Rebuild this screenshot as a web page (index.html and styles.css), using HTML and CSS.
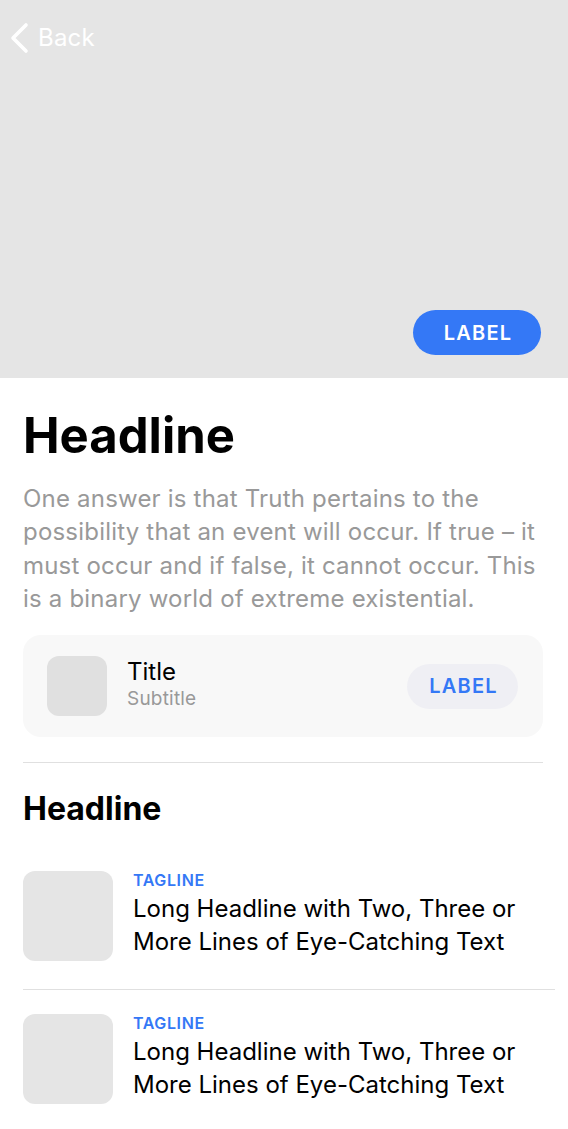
FILE: index.html
```html
<!DOCTYPE html>
<html>
<head>
<meta charset="utf-8">
<link rel="stylesheet" href="styles.css">
</head>
<body>
<div class="hero">
  <div class="nav">
    <svg class="chev" width="20" height="32" viewBox="0 0 20 32"><path d="M16 3 L3 16 L16 29" fill="none" stroke="#fff" stroke-width="3.6" stroke-linecap="round" stroke-linejoin="round"/></svg>
    <span class="back">Back</span>
  </div>
  <div class="hero-foot"><span class="btn-primary">LABEL</span></div>
</div>
<div class="content">
  <h1 class="title">Headline</h1>
  <p class="lead">One answer is that Truth pertains to the possibility that an event will occur. If true – it must occur and if false, it cannot occur. This is a binary world of extreme existential.</p>
  <div class="card">
    <div class="thumb-sm"></div>
    <div class="card-text">
      <div class="card-title">Title</div>
      <div class="card-sub">Subtitle</div>
    </div>
    <span class="btn-soft">LABEL</span>
  </div>
  <div class="rule"></div>
  <h2 class="section">Headline</h2>
  <div class="item">
    <div class="thumb"></div>
    <div class="item-text">
      <div class="tag">TAGLINE</div>
      <div class="item-title">Long Headline with Two, Three or More Lines of Eye-Catching Text</div>
    </div>
  </div>
  <div class="rule wide"></div>
  <div class="item">
    <div class="thumb"></div>
    <div class="item-text">
      <div class="tag">TAGLINE</div>
      <div class="item-title">Long Headline with Two, Three or More Lines of Eye-Catching Text</div>
    </div>
  </div>
</div>
</body>
</html>
```
FILE: styles.css
```css
* { box-sizing: border-box; }
body {
  margin: 0;
  width: 568px;
  background: #fff;
  font-family: Inter, "Noto Sans", sans-serif;
  color: #000;
}
.hero {
  height: 378px;
  background: #e5e5e5;
  display: flex;
  flex-direction: column;
  justify-content: space-between;
}
.nav {
  display: flex;
  align-items: center;
  padding: 22px 0 0 10px;
  gap: 8px;
}
.chev { display: block; }
.back {
  color: #fff;
  font-size: 24px;
  line-height: 32px;
  letter-spacing: 0.2px;
}
.hero-foot {
  display: flex;
  justify-content: flex-end;
  padding: 0 27px 23px 0;
}
.btn-primary {
  background: #3478f6;
  color: #fff;
  font-size: 20px;
  font-weight: 600;
  height: 45px;
  width: 128px;
  border-radius: 23px;
  display: flex;
  align-items: center;
  justify-content: center;
  letter-spacing: 1.2px;
  padding-left: 2px;
}
.content {
  padding: 0 25px 0 23px;
}
.title {
  margin: 0;
  padding-top: 28px;
  font-size: 49px;
  font-weight: 700;
  line-height: 60px;
  letter-spacing: 0;
}
.lead {
  margin: 16px 0 0;
  font-size: 24px;
  line-height: 33.3px;
  color: #999;
  width: 522px;
  letter-spacing: 0.2px;
}
.card {
  margin-top: 20px;
  width: 520px;
  height: 102px;
  background: #f8f8f8;
  border-radius: 18px;
  display: flex;
  align-items: center;
  padding: 0 24px;
}
.thumb-sm {
  width: 60px;
  height: 60px;
  border-radius: 12px;
  background: #e0e0e0;
  flex: none;
}
.card-text {
  flex: 1;
  margin-left: 20px;
  padding-bottom: 3px;
}
.card-title {
  font-size: 24px;
  line-height: 28px;
}
.card-sub {
  font-size: 19px;
  line-height: 26px;
  color: #999;
  letter-spacing: 0.2px;
}
.btn-soft {
  background: #efeff4;
  color: #3478f6;
  font-size: 20px;
  font-weight: 600;
  width: 111px;
  height: 45px;
  border-radius: 23px;
  display: flex;
  align-items: center;
  justify-content: center;
  letter-spacing: 1.2px;
  padding-left: 2px;
  margin-right: 1px;
}
.rule {
  margin-top: 25px;
  width: 520px;
  height: 1px;
  background: #e0e0e0;
}
.rule.wide {
  width: 532px;
  margin-top: 28px;
}
.section {
  margin: 0;
  padding-top: 26px;
  font-size: 32px;
  font-weight: 700;
  line-height: 40px;
  letter-spacing: 0;
}
.item {
  display: flex;
  align-items: flex-start;
  margin-top: 42px;
}
.rule.wide + .item { margin-top: 24px; }
.thumb {
  width: 90px;
  height: 90px;
  border-radius: 12px;
  background: #e5e5e5;
  flex: none;
}
.item-text {
  margin-left: 20px;
  flex: 1;
}
.tag {
  color: #3478f6;
  font-size: 16px;
  font-weight: 600;
  line-height: 20px;
  letter-spacing: 0.6px;
  margin-top: -1px;
}
.item-title {
  font-size: 24px;
  line-height: 32.5px;
  margin-top: 3px;
}
```
